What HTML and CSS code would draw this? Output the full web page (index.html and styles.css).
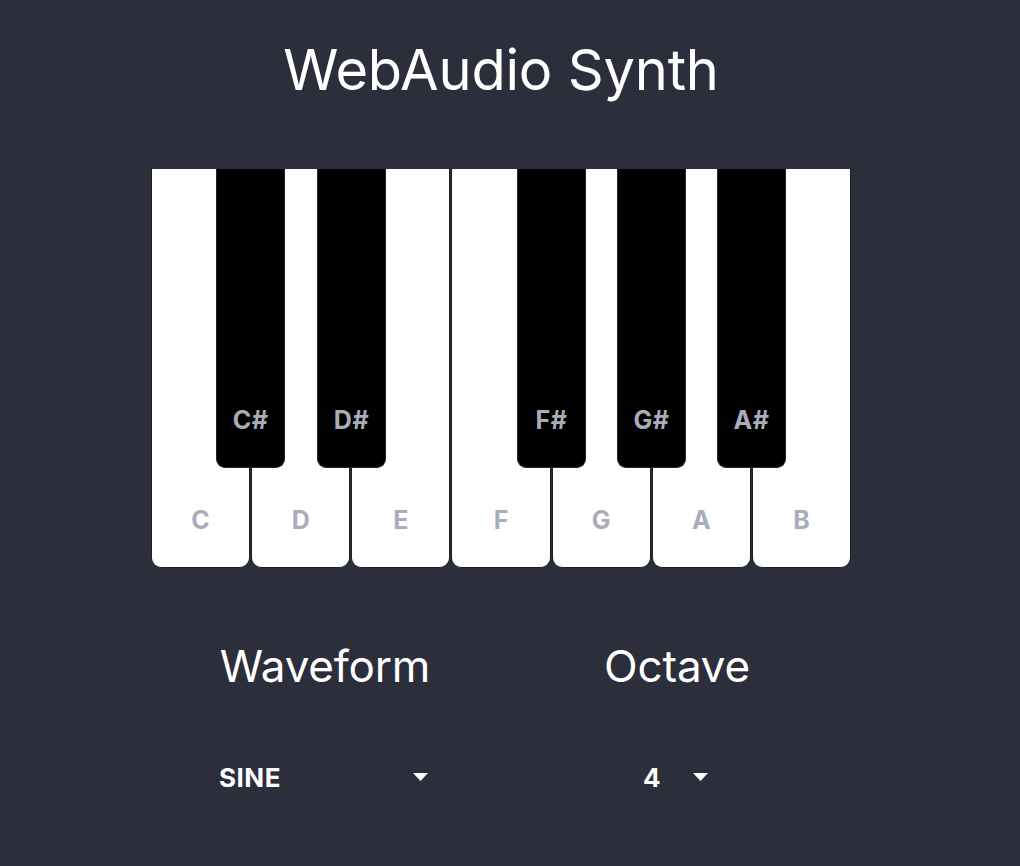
FILE: index.html
```html
<!DOCTYPE html>
<html lang="en">
<head>
<meta charset="utf-8">
<title>WebAudio Synth</title>
<link rel="stylesheet" href="styles.css">
</head>
<body>
<main class="app">
  <h1 class="title">WebAudio Synth</h1>
  <div class="keyboard">
    <div class="white-keys">
      <div class="key white"><span>C</span></div>
      <div class="key white"><span>D</span></div>
      <div class="key white"><span>E</span></div>
      <div class="key white"><span>F</span></div>
      <div class="key white"><span>G</span></div>
      <div class="key white"><span>A</span></div>
      <div class="key white"><span>B</span></div>
    </div>
    <div class="key black k1"><span>C#</span></div>
    <div class="key black k2"><span>D#</span></div>
    <div class="key black k4"><span>F#</span></div>
    <div class="key black k5"><span>G#</span></div>
    <div class="key black k6"><span>A#</span></div>
  </div>
  <div class="controls">
    <div class="control">
      <h2 class="label">Waveform</h2>
      <div class="select wave"><span>SINE</span><svg class="caret" width="15" height="8" viewBox="0 0 15 8"><path d="M0 0H15L7.5 8Z" fill="#fff"/></svg></div>
    </div>
    <div class="control">
      <h2 class="label">Octave</h2>
      <div class="select octave"><span>4</span><svg class="caret" width="15" height="8" viewBox="0 0 15 8"><path d="M0 0H15L7.5 8Z" fill="#fff"/></svg></div>
    </div>
  </div>
</main>
</body>
</html>
```
FILE: styles.css
```css
html, body {
  margin: 0;
  padding: 0;
  background: #2c2f3b;
  color: #fff;
  font-family: Inter, "Liberation Sans", sans-serif;
}
.app {
  width: 1002px;
  height: 866px;
  display: flex;
  flex-direction: column;
  align-items: center;
}
.title {
  margin: 34px 0 0;
  font-size: 56px;
  font-weight: 400;
  line-height: 72px;
  letter-spacing: -0.2px;
}
.keyboard {
  position: relative;
  margin-top: 63px;
  width: 700px;
  height: 399px;
}
.white-keys {
  display: flex;
  height: 100%;
  gap: 1px;
}
.key {
  box-sizing: border-box;
  display: flex;
  justify-content: center;
  align-items: flex-end;
  font-weight: 700;
  color: #a9adbb;
}
.white {
  flex: 1;
  background: #fff;
  border: 1px solid #1c1e25;
  border-top: none;
  border-radius: 0 0 10px 10px;
  font-size: 25px;
  padding-bottom: 32px;
}
.black {
  position: absolute;
  top: 0;
  width: 69px;
  height: 299px;
  background: #000;
  border: 1px solid #24262e;
  border-top: none;
  border-radius: 0 0 9px 9px;
  font-size: 25px;
  letter-spacing: 0.5px;
  padding-bottom: 32px;
}
.k1 { left: 65px; }
.k2 { left: 166px; }
.k4 { left: 366px; }
.k5 { left: 466px; }
.k6 { left: 566px; }
.controls {
  margin-top: 68px;
  width: 704px;
  display: grid;
  grid-template-columns: 1fr 1fr;
}
.control {
  display: flex;
  flex-direction: column;
  align-items: center;
}
.label {
  margin: 0;
  font-size: 44px;
  font-weight: 400;
  line-height: 60px;
  letter-spacing: -0.2px;
}
.select {
  margin-top: 63px;
  display: flex;
  align-items: center;
  justify-content: space-between;
  font-size: 26px;
  font-weight: 700;
  height: 36px;
  box-sizing: border-box;
}
.select.wave {
  width: 222px;
  padding: 0 8px 0 5px;
  letter-spacing: 0.5px;
}
.select.octave {
  width: 76px;
  padding: 0 7px 0 4px;
}
.caret {
  display: block;
}
```
